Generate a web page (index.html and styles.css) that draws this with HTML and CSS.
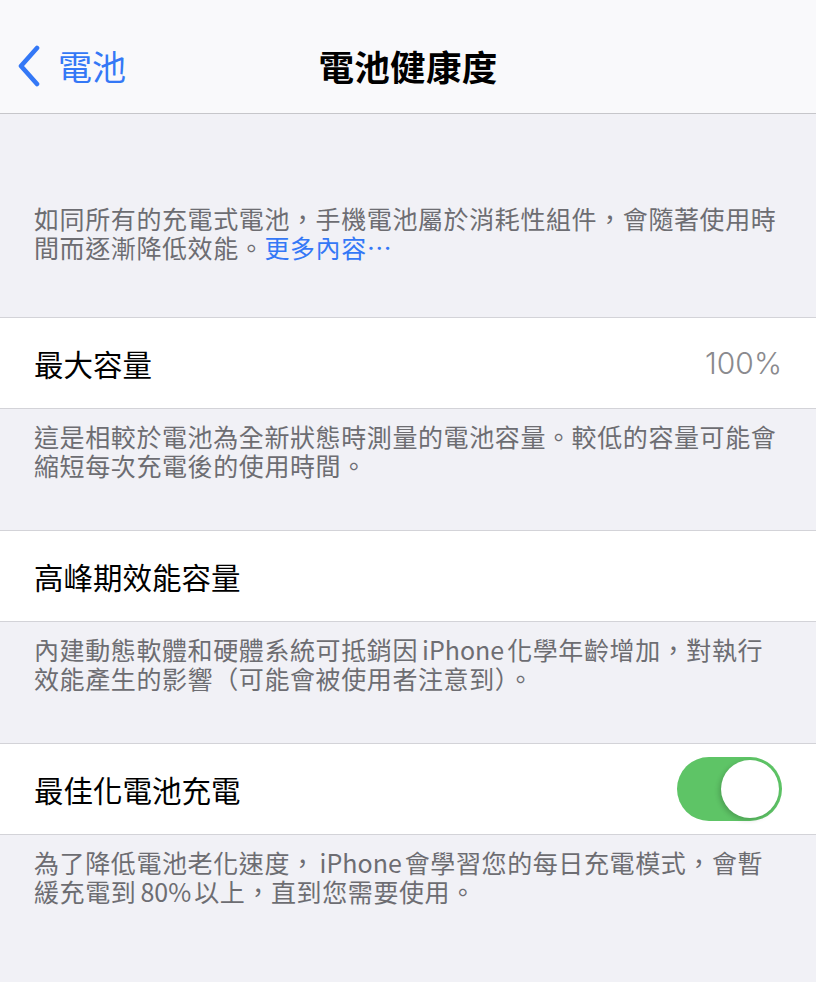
FILE: index.html
```html
<!DOCTYPE html>
<html lang="zh-Hant">
<head>
<meta charset="utf-8">
<link rel="stylesheet" href="styles.css">
</head>
<body>
<div class="screen">
  <header class="nav">
    <div class="nav-back">
      <svg class="chevron" width="26" height="42" viewBox="0 0 26 42"><path d="M21 3 L5 21 L21 39" fill="none" stroke="#3478f6" stroke-width="4.6" stroke-linecap="round" stroke-linejoin="round"/></svg>
      <span class="back-label">電池</span>
    </div>
    <h1 class="nav-title">電池健康度</h1>
    <div></div>
  </header>

  <p class="intro">如同所有的充電式電池，手機電池屬於消耗性組件，會隨著使用時<br>間而逐漸降低效能。<span class="link">更多內容⋯</span></p>

  <div class="group">
    <div class="row"><span class="row-label">最大容量</span><span class="row-value">100%</span></div>
  </div>
  <p class="footer">這是相較於電池為全新狀態時測量的電池容量。較低的容量可能會<br>縮短每次充電後的使用時間。</p>

  <div class="group">
    <div class="row"><span class="row-label">高峰期效能容量</span></div>
  </div>
  <p class="footer">內建動態軟體和硬體系統可抵銷因<span class="latin">iPhone</span>化學年齡增加，對執行<br>效能產生的影響（可能會被使用者注意到）。</p>

  <div class="group">
    <div class="row"><span class="row-label">最佳化電池充電</span><span class="toggle"><span class="knob"></span></span></div>
  </div>
  <p class="footer last">為了降低電池老化速度，<span class="latin">iPhone</span>會學習您的每日充電模式，會暫<br>緩充電到<span class="latin">80%</span>以上，直到您需要使用。</p>
</div>
</body>
</html>
```

FILE: styles.css
```css
* { box-sizing: border-box; }
html, body { margin: 0; padding: 0; }
body {
  background: #f1f1f6;
  font-family: "Noto Sans CJK TC", "Noto Sans", sans-serif;
  width: 816px;
  height: 982px;
  overflow: hidden;
}
.screen { width: 816px; }

.nav {
  height: 114px;
  background: #f9f9fb;
  border-bottom: 1px solid #c6c6ca;
  display: grid;
  grid-template-columns: 1fr auto 1fr;
  align-items: center;
  padding-top: 19px;
}
.nav-back {
  display: flex;
  align-items: center;
  padding-left: 16px;
  color: #3478f6;
}
.chevron { margin-right: 16px; }
.back-label {
  font-size: 34px;
  line-height: 40px;
}
.nav-title {
  margin: 0;
  font-size: 35.5px;
  font-weight: 700;
  line-height: 40px;
  color: #000;
  letter-spacing: 0.3px;
}

.intro, .footer {
  margin: 0;
  color: #6d6d72;
  font-size: 25px;
  letter-spacing: 0.6px;
  line-height: 28.5px;
  padding-left: 34px;
}
.intro {
  padding-top: 90px;
  height: 203px;
}
.link { color: #3478f6; }
.latin {
  margin: 0 3px 0 4px;
  letter-spacing: 0;
}

.group {
  background: #fff;
  border-top: 1px solid #d3d3d8;
  border-bottom: 1px solid #d3d3d8;
}
.row {
  height: 90px;
  display: flex;
  align-items: center;
  justify-content: space-between;
  padding: 0 34px;
}
.row-label {
  font-size: 29.5px;
  color: #000;
}
.row-value {
  font-size: 30px;
  color: #8a8a8e;
  font-family: "Inter", "Liberation Sans", sans-serif;
  font-weight: 300;
}

.footer {
  padding-top: 13px;
  height: 121px;
}
.footer.last { height: 148px; }

.toggle {
  width: 105px;
  height: 64px;
  border-radius: 32px;
  background: #5ec466;
  display: flex;
  align-items: center;
  justify-content: flex-end;
  padding-right: 3px;
}
.knob {
  width: 58px;
  height: 58px;
  border-radius: 50%;
  background: #fff;
  box-shadow: -2px 2px 5px rgba(0,0,0,0.18);
}
```
